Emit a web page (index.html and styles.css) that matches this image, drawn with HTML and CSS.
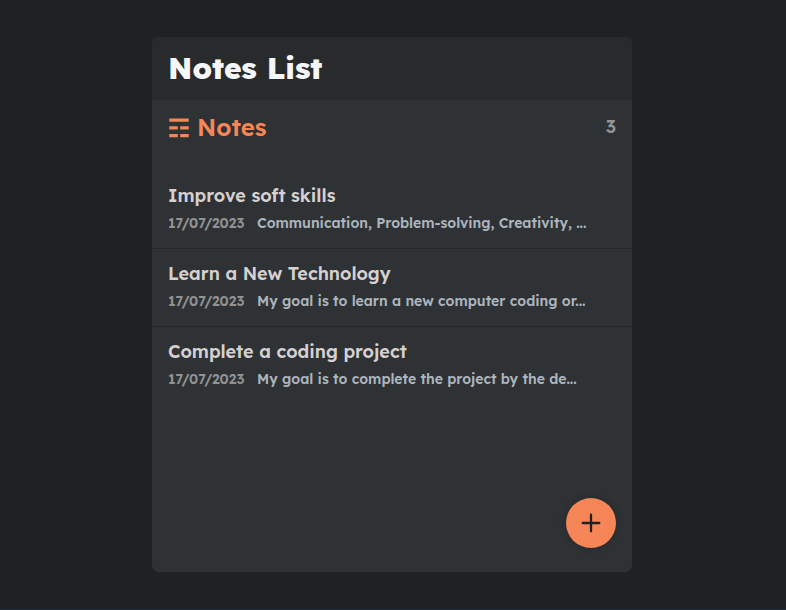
FILE: index.html
```html
<!DOCTYPE html>
<html lang="en">
<head>
<meta charset="utf-8">
<title>Notes List</title>
<link rel="stylesheet" href="styles.css">
</head>
<body>
<main class="app">
  <header class="app-header"><h1>Notes List</h1></header>
  <section class="notes">
    <div class="notes-header">
      <h2>
        <svg class="list-icon" width="20" height="20" viewBox="0 0 20 20" fill="currentColor" aria-hidden="true">
          <path d="M0.3 0.4h19.4v3.3H0.3zM0.3 8.3h8.5v3.2H0.3zM11.2 8.3h8.5v3.2h-8.5zM0.3 15.9h8.5v3.3H0.3zM11.2 15.9h8.5v3.3h-8.5z"/>
        </svg>
        <span>Notes</span>
      </h2>
      <span class="count">3</span>
    </div>
    <div class="notes-list">
      <article class="note">
        <h3>Improve soft skills</h3>
        <p><time>17/07/2023</time><span>Communication, Problem-solving, Creativity, ...</span></p>
      </article>
      <article class="note">
        <h3>Learn a New Technology</h3>
        <p><time>17/07/2023</time><span>My goal is to learn a new computer coding or...</span></p>
      </article>
      <article class="note">
        <h3>Complete a coding project</h3>
        <p><time>17/07/2023</time><span>My goal is to complete the project by the de...</span></p>
      </article>
    </div>
  </section>
  <a class="add" href="#" aria-label="Add note">
    <svg width="24" height="24" viewBox="0 0 24 24" fill="none" stroke="currentColor" stroke-width="2.3" stroke-linecap="round"><path d="M12 3.7v16.6M3.7 12h16.6"/></svg>
  </a>
</main>
</body>
</html>
```

FILE: styles.css
```css
* { box-sizing: border-box; margin: 0; padding: 0; }
body {
  height: 610px;
  padding-top: 37px;
  overflow: hidden;
  background: #1f2124;
  border-bottom: 1px solid #222b33;
  font-family: Lexend, Inter, sans-serif;
  white-space: nowrap;
}
.app {
  position: relative;
  width: 480px;
  height: 535px;
  margin-left: 152px;
  overflow: hidden;
  border-radius: 7px;
  background: #2e3235;
}
.app-header { height: 63px; padding: 0 16px; background: #292a2b; }
h1 { font-size: 30px; line-height: 63px; font-weight: 800; color: #f5f6f7; }
.notes-header { display: flex; justify-content: space-between; height: 56px; padding: 0 16px; line-height: 54px; }
h2 { display: flex; align-items: center; gap: 8px; height: 54px; padding-left: 1px; font-size: 24px; font-weight: 600; color: #f68657; }
.list-icon { margin-top: 2px; }
.count { font-size: 18px; font-weight: 600; color: #929699; }
.notes-list { padding-top: 15px; }
.note { height: 78px; padding: 13px 16px 0; border-bottom: 1px solid #242629; }
.note:last-child { border-bottom: 0; }
.note h3 { font-size: 18px; line-height: 24px; font-weight: 600; color: #d6d1d0; }
.note p { display: flex; padding-top: 5px; font-size: 14px; line-height: 20px; font-weight: 600; color: #acb4bd; }
.note time { width: 89px; color: #929292; }
.add {
  position: absolute;
  right: 16px;
  bottom: 24px;
  display: flex;
  align-items: center;
  justify-content: center;
  width: 50px;
  height: 50px;
  border-radius: 50%;
  background: #f68657;
  color: #1f2124;
  box-shadow: 0 0 8px rgba(0, 0, 0, 0.2);
}
```
